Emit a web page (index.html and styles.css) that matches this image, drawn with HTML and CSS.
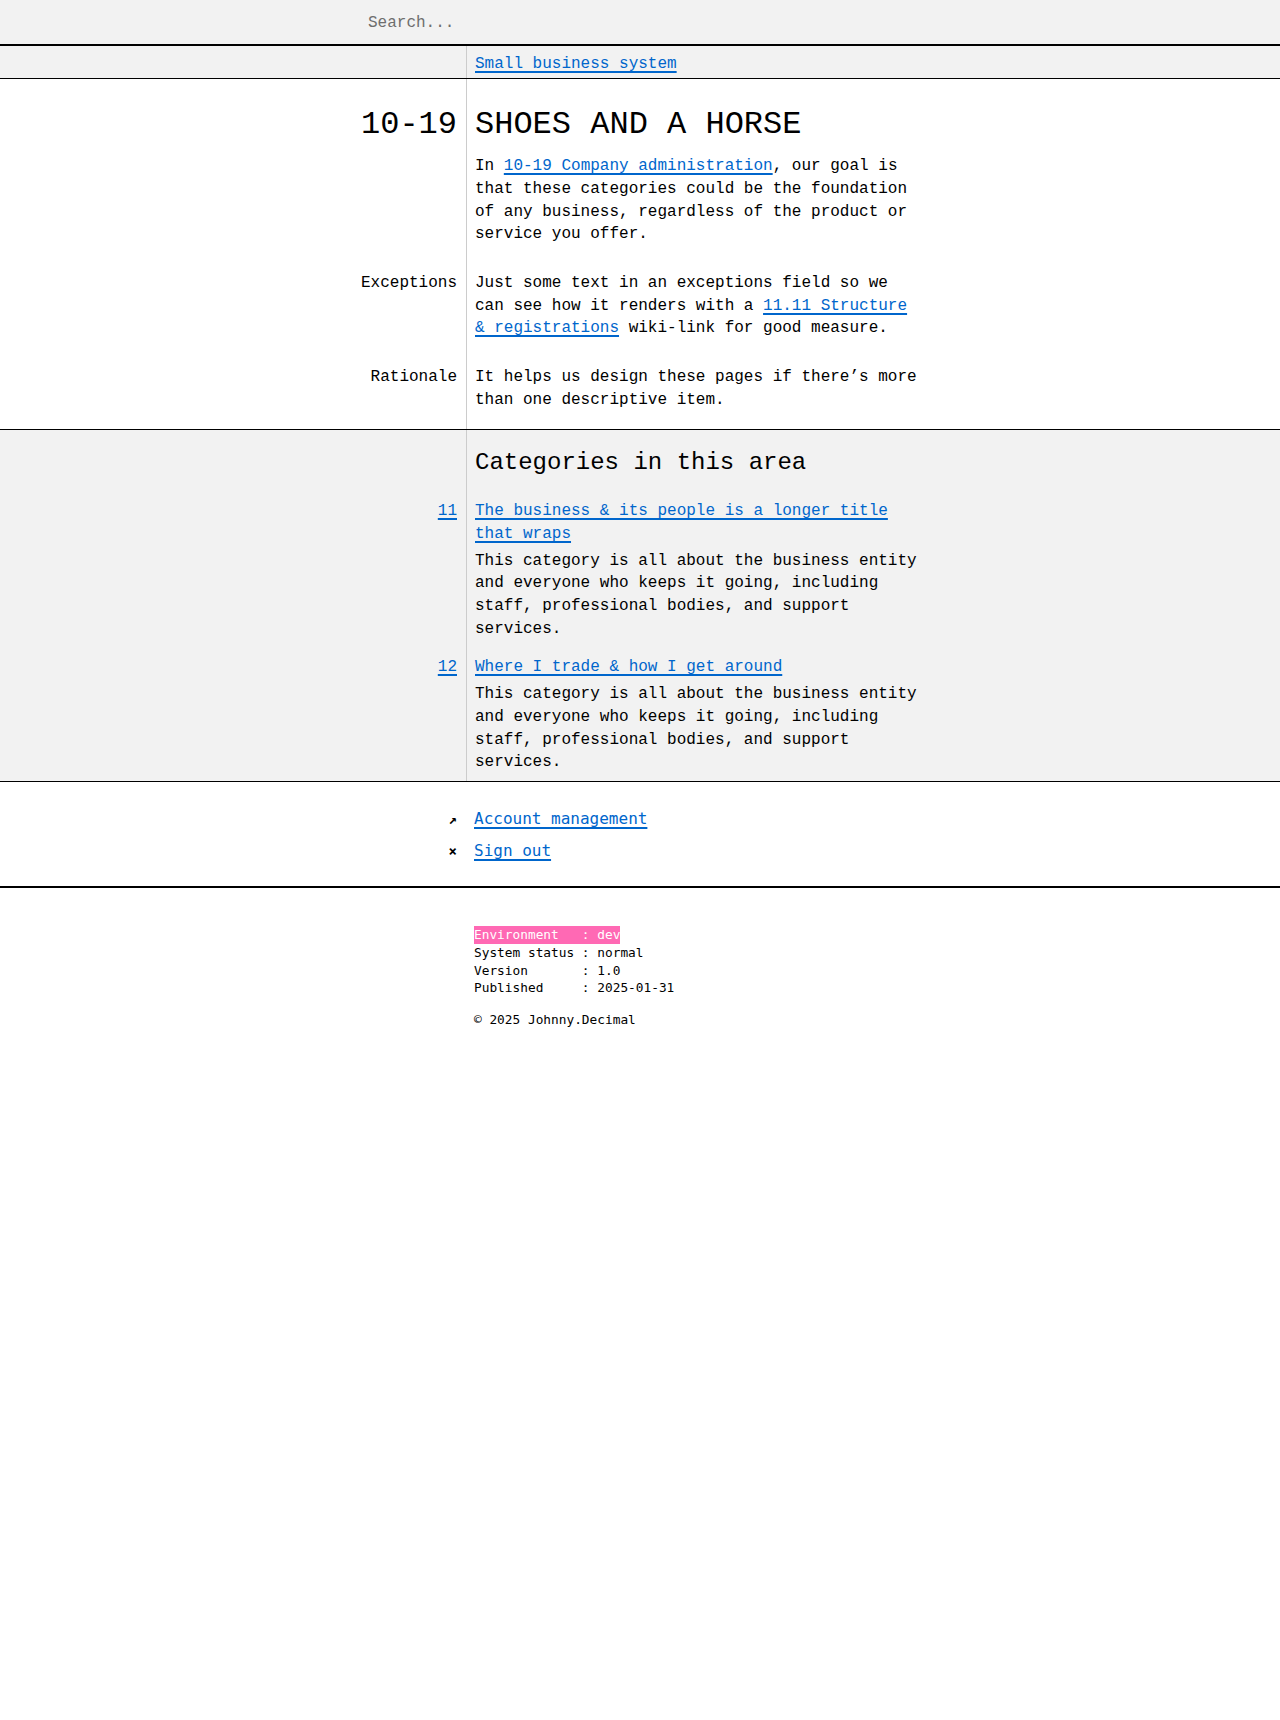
FILE: index.html
```html
<!DOCTYPE html>
<html lang="en">
<head>
<meta charset="utf-8">
<title>10-19 Shoes and a horse</title>
<link rel="stylesheet" href="styles.css">
</head>
<body>
<header class="search-bar">
  <input class="search" type="text" placeholder="Search...">
</header>

<nav class="crumbs split">
  <div class="left"></div>
  <div class="right"><a href="#">Small business system</a></div>
</nav>

<main>
  <section class="area split">
    <div class="left big">10-19</div>
    <div class="right">
      <h1 class="title">SHOES AND A HORSE</h1>
      <p class="text">In <a href="#">10-19 Company administration</a>, our goal is that these categories could be the foundation of any business, regardless of the product or service you offer.</p>
    </div>

    <div class="left label gap">Exceptions</div>
    <div class="right gap"><p class="text">Just some text in an exceptions field so we can see how it renders with a <a href="#">11.11 Structure &amp; registrations</a> wiki-link for good measure.</p></div>

    <div class="left label gap">Rationale</div>
    <div class="right gap"><p class="text">It helps us design these pages if there’s more than one descriptive item.</p></div>
  </section>

  <section class="cats split">
    <div class="left"></div>
    <div class="right"><h2 class="subtitle">Categories in this area</h2></div>

    <div class="left label item-first"><a href="#">11</a></div>
    <div class="right item-first">
      <a class="cat-link" href="#">The business &amp; its people is a longer title that wraps</a>
      <p class="text desc">This category is all about the business entity and everyone who keeps it going, including staff, professional bodies, and support services.</p>
    </div>

    <div class="left label item"><a href="#">12</a></div>
    <div class="right item">
      <a class="cat-link" href="#">Where I trade &amp; how I get around</a>
      <p class="text desc">This category is all about the business entity and everyone who keeps it going, including staff, professional bodies, and support services.</p>
    </div>
  </section>
</main>

<section class="account">
  <ul class="acct-list">
    <li class="acct-row"><span class="acct-icon">↗</span><a href="#">Account management</a></li>
    <li class="acct-row"><span class="acct-icon">×</span><a href="#">Sign out</a></li>
  </ul>
</section>

<footer class="footer">
  <div class="status">
    <div class="status-line"><span class="env">Environment   : dev</span></div>
    <div class="status-line">System status : normal</div>
    <div class="status-line">Version       : 1.0</div>
    <div class="status-line">Published     : 2025-01-31</div>
  </div>
  <p class="copy">© 2025 Johnny.Decimal</p>
</footer>
</body>
</html>
```

FILE: styles.css
```css
* { box-sizing: border-box; }

html, body { margin: 0; padding: 0; }

body {
  font-family: "Liberation Mono", "DejaVu Sans Mono", monospace;
  font-size: 16px;
  line-height: 22.7px;
  color: #000;
  background: #fff;
}

a {
  color: #0066cc;
  text-decoration: underline;
  text-decoration-thickness: 2px;
  text-underline-offset: 3px;
}

p, h1, h2, ul { margin: 0; padding: 0; }

/* search */
.search-bar {
  height: 46px;
  background: #f2f2f2;
  border-bottom: 2px solid #000;
  display: flex;
  align-items: center;
  padding-top: 2px;
}

.search {
  margin-left: 368px;
  padding: 0;
  border: 0;
  background: transparent;
  font-family: "Liberation Mono", "DejaVu Sans Mono", monospace;
  font-size: 16px;
  width: 400px;
  outline: none;
  color: #000;
}

.search::placeholder { color: #6e6e6e; }

/* two-column grid with divider */
.split {
  display: grid;
  grid-template-columns: 466px 1fr;
  background-image: linear-gradient(#cccccc, #cccccc);
  background-size: 1px 100%;
  background-position: 466px 0;
  background-repeat: no-repeat;
}

.split .left {
  padding-right: 9px;
  text-align: right;
}

.split .right {
  padding-left: 9px;
  max-width: 455px;
  box-sizing: content-box;
}

.crumbs {
  background-color: #f2f2f2;
  border-bottom: 1px solid #000;
  padding: 7px 0 2px;
}

.area {
  padding: 27px 0 18px;
  border-bottom: 1px solid #000;
}

.big {
  font-size: 32px;
  line-height: 1.2;
}

.title {
  font-size: 32px;
  line-height: 1.2;
  font-weight: normal;
  margin-bottom: 11px;
}

.text { max-width: 446px; }

.gap { padding-top: 26px; }

.cats {
  background-color: #f2f2f2;
  padding: 19px 0 7px;
  border-bottom: 1px solid #000;
}

.subtitle {
  font-size: 24px;
  line-height: 1.2;
  font-weight: normal;
}

.item-first { padding-top: 22px; }
.item { padding-top: 16px; }

.desc { margin-top: 4px; }

/* account */
.account {
  padding: 26px 0 23px;
  border-bottom: 2px solid #000;
  font-family: "DejaVu Sans Mono", monospace;
}

.acct-list {
  list-style: none;
  display: flex;
  flex-direction: column;
  gap: 9.4px;
}

.acct-row {
  display: grid;
  grid-template-columns: 466px 1fr;
}

.acct-icon {
  text-align: right;
  padding-right: 9px;
  font-size: 14px;
  font-weight: bold;
  line-height: 22.7px;
}

.acct-row a { justify-self: start; margin-left: 8px; }

/* footer */
.footer {
  padding: 38px 0 0 474px;
  font-family: "DejaVu Sans Mono", monospace;
  font-size: 12.8px;
  line-height: 17.9px;
}

.status-line { white-space: pre; }

.env {
  display: inline-block;
  background: #ff69b4;
  color: #fff;
}

.copy { margin-top: 13.5px; }
```
